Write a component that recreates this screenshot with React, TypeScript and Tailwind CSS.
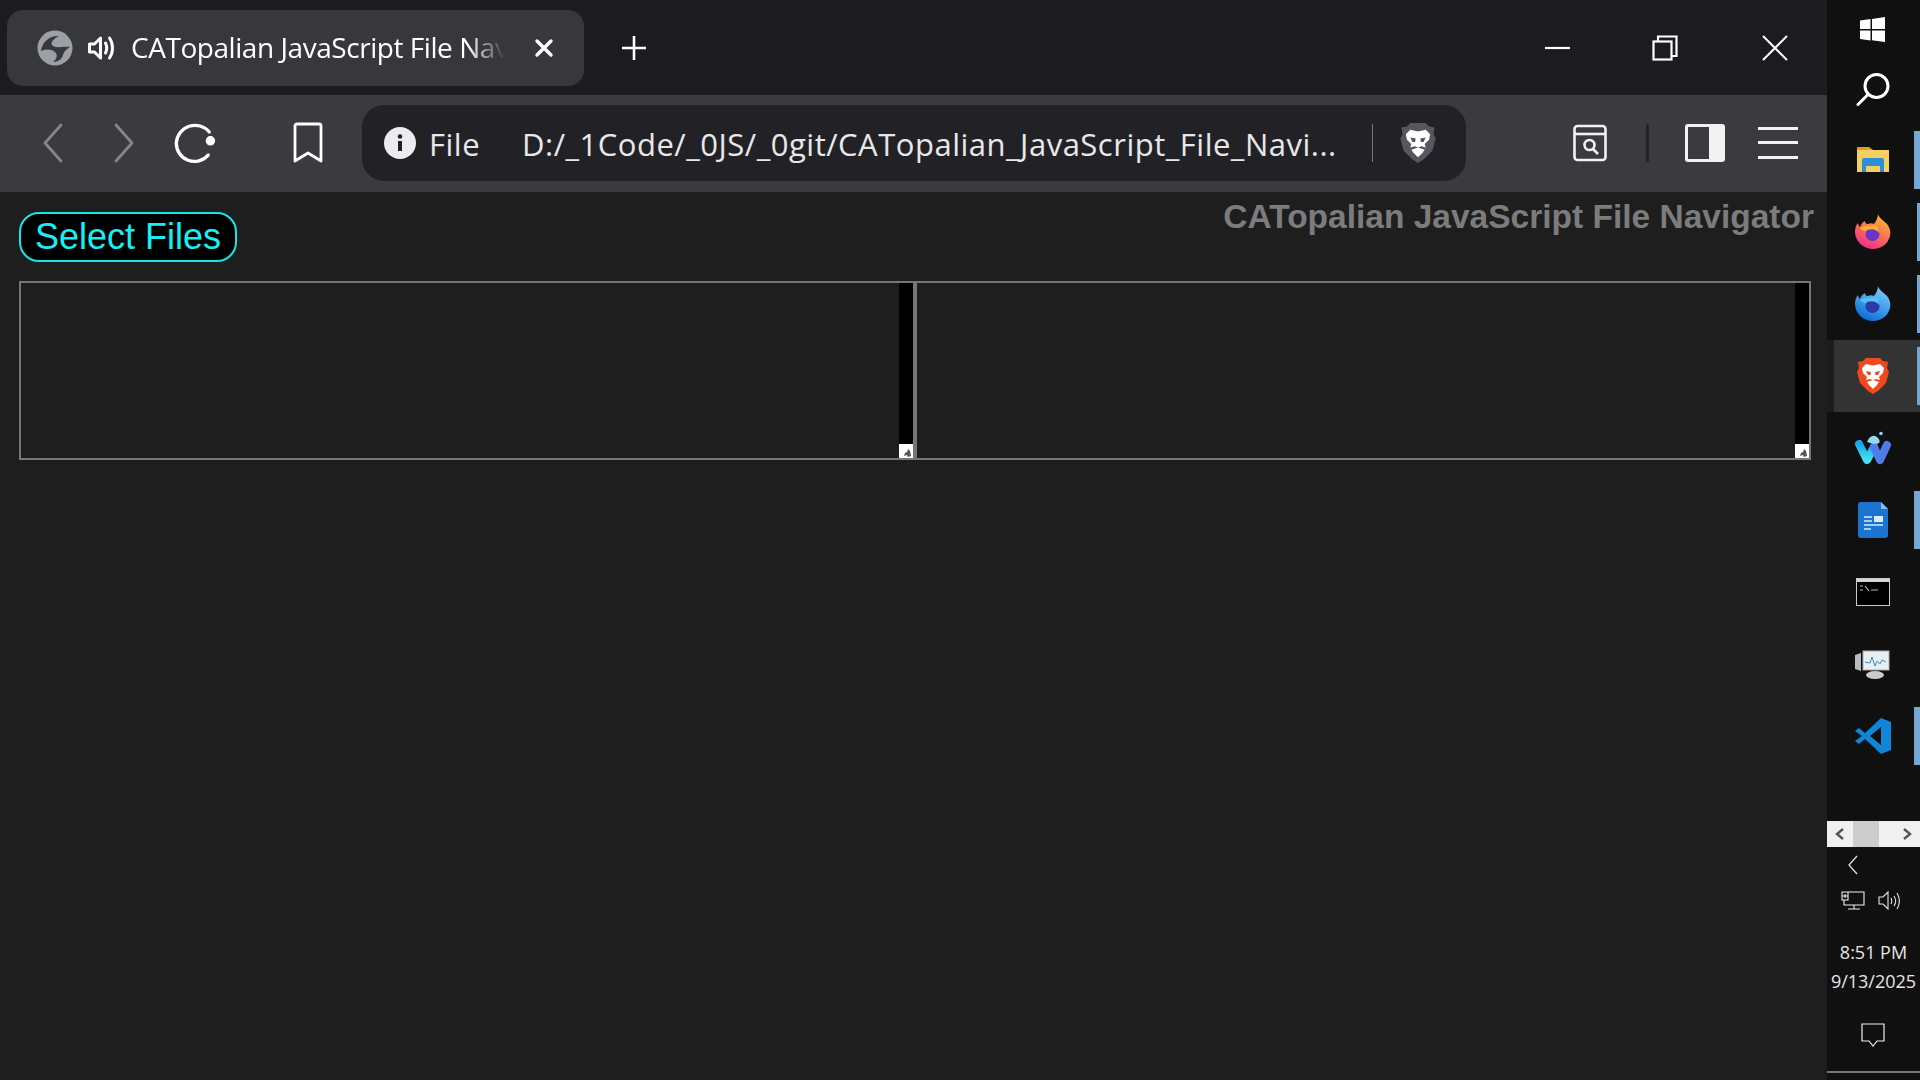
import { ReactNode } from 'react';

const segoe = 'font-["Open_Sans",sans-serif]';
const arial = 'font-["Liberation_Sans",Arial,sans-serif]';

const GlobeIcon = () => (
    <svg width="36" height="36" viewBox="0 0 36 36">
        <circle cx="18" cy="18" r="17.500" fill="#9aa0a6" />
        <path d="M4 21C5 12 13 5 22 6c-4 2-9 6-7 9 3 4 11 1 18 2-3 2-6 4-7 8-1 4-5 7-10 7 4-3 5-7 2-10-4-3-9-3-14-1z" fill="#37373c" />
    </svg>
);

const SpeakerIcon = () => (
    <svg width="30" height="30" viewBox="0 0 30 30" fill="none" stroke="#fff" strokeWidth="3" strokeLinejoin="round" strokeLinecap="round">
        <path d="M2.500 11h5l6-6v20l-6-6h-5z" />
        <path d="M18.500 10c1.500 3 1.500 7 0 10" />
        <path d="M22.500 5c4 6 4 14 0 20" />
    </svg>
);

const BraveShield = ({ body, face, w = 36, h = 42 }: { body: string; face: string; w?: number; h?: number }) => (
    <svg width={w} height={h} viewBox="0 0 32 38">
        <path d="M9 1h14l3 3 5 1-1 6 2 4-3 11-8 8-5 3-5-3-8-8L0 15l2-4-1-6 5-1z" fill={body} />
        <path d="M9 7l7 1.500L23 7l4 4-1 5-4 4 1 3-4-1-3 1-3-1-4 1 1-3-4-4-1-5z" fill={face} />
        <path d="M9 14l5 1 0 3-3 0zM23 14l-5 1 0 3 3 0z" fill={body} />
        <path d="M14 15h4l1 6-3 2-3-2z" fill={face} />
        <path d="M10 25l6-2 6 2-2 3-4 4-4-4z" fill={face} />
    </svg>
);

const Slot = ({ w, children, className = '' }: { w: string; children?: ReactNode; className?: string }) => (
    <div className={`flex items-center justify-center shrink-0 ${w} ${className}`}>{children}</div>
);

const TabStrip = () => (
    <div className="flex items-start h-[95px] bg-[#1c1c20] pt-[10px] pl-[7px] shrink-0">
        <div className="flex items-center w-[577px] h-[76px] rounded-[16px] bg-[#37373c]">
            <Slot w="w-[36px]" className="ml-[30px]"><GlobeIcon /></Slot>
            <Slot w="w-[30px]" className="ml-[14px]"><SpeakerIcon /></Slot>
            <span className={`ml-[14px] w-[374px] overflow-hidden whitespace-nowrap text-[28px] leading-[36px] -mt-[2px] tracking-[-0.45px] text-white [mask-image:linear-gradient(to_right,black_90%,transparent)] ${segoe}`}>
                CATopalian JavaScript File Navigator
            </span>
            <Slot w="w-[20px]" className="ml-[29px]">
                <svg width="20" height="20" viewBox="0 0 20 20" stroke="#fff" strokeWidth="3.400" strokeLinecap="round">
                    <path d="M3 3l14 14M17 3L3 17" />
                </svg>
            </Slot>
        </div>
        <Slot w="w-[28px]" className="ml-[36px] h-[76px]">
            <svg width="28" height="28" viewBox="0 0 28 28" stroke="#fff" strokeWidth="2.600">
                <path d="M14 2v24M2 14h24" />
            </svg>
        </Slot>
        <div className="flex items-center h-[76px] ml-[897px]">
            <svg width="26" height="4" viewBox="0 0 26 4"><path d="M0 2h25" stroke="#fff" strokeWidth="2.200" /></svg>
            <svg className="ml-[81px]" width="26" height="26" viewBox="0 0 26 26" fill="none" stroke="#fff" strokeWidth="2.200">
                <rect x="1.500" y="6.500" width="18" height="18" />
                <path d="M6 6V1.500h18.500V21H20" />
            </svg>
            <svg className="ml-[84px]" width="26" height="26" viewBox="0 0 26 26" stroke="#fff" strokeWidth="2">
                <path d="M1 1l24 24M25 1L1 25" />
            </svg>
        </div>
    </div>
);

const Toolbar = () => (
    <div className="flex items-center h-[97px] mb-px pb-[2px] bg-[#3a3a3f] shrink-0">
        <Slot w="w-[22px]" className="ml-[42px]">
            <svg width="20" height="40" viewBox="0 0 20 40" fill="none" stroke="#85858a" strokeWidth="2.800" strokeLinecap="round" strokeLinejoin="round">
                <path d="M18 2L2 20l16 18" />
            </svg>
        </Slot>
        <Slot w="w-[22px]" className="ml-[49px]">
            <svg width="20" height="40" viewBox="0 0 20 40" fill="none" stroke="#85858a" strokeWidth="2.800" strokeLinecap="round" strokeLinejoin="round">
                <path d="M2 2l16 18L2 38" />
            </svg>
        </Slot>
        <Slot w="w-[44px]" className="ml-[38px]">
            <svg width="44" height="44" viewBox="0 0 40 40" fill="none" stroke="#fff" strokeWidth="3" strokeLinecap="round">
                <path d="M33 10A17 17 0 0 0 3 20a16.500 16.500 0 0 0 29 11" />
                <circle cx="34" cy="18" r="3.800" fill="#fff" strokeWidth="1" />
            </svg>
        </Slot>
        <Slot w="w-[30px]" className="ml-[76px]">
            <svg width="30" height="42" viewBox="0 0 30 42" fill="none" stroke="#fff" strokeWidth="2.800" strokeLinejoin="round">
                <path d="M4 2h22a2 2 0 0 1 2 2v35l-13-8-13 8V4a2 2 0 0 1 2-2z" />
            </svg>
        </Slot>
        <div className="flex items-center w-[1104px] h-[76px] ml-[39px] rounded-[22px] bg-[#222226] text-[#e8e8ea]">
            <Slot w="w-[32px]" className="ml-[22px]">
                <svg width="32" height="32" viewBox="0 0 32 32">
                    <circle cx="16" cy="16" r="16" fill="#ececef" />
                    <rect x="14" y="14" width="4" height="10" fill="#222226" />
                    <circle cx="16" cy="9.500" r="2.300" fill="#222226" />
                </svg>
            </Slot>
            <span className={`ml-[13px] w-[93px] text-[31px] leading-[44px] mt-[2px] tracking-[0.5px] ${segoe}`}>File</span>
            <span className={`w-[850px] whitespace-nowrap overflow-hidden text-[31px] leading-[44px] mt-[2px] tracking-[0.5px] ${segoe}`}>
                D:/_1Code/_0JS/_0git/CATopalian_JavaScript_File_Navi...
            </span>
            <div className="w-px h-[38px] bg-[#77777b] shrink-0" />
            <Slot w="w-[36px]" className="ml-[27px]"><BraveShield body="#55565f" face="#ffffff" /></Slot>
        </div>
        <Slot w="w-[34px]" className="ml-[107px]">
            <svg width="42" height="38" viewBox="0 0 34 38" fill="none" stroke="#f2f2f2" strokeWidth="2.600">
                <rect x="1.500" y="2" width="31" height="34" rx="3" />
                <path d="M1.500 10h31" />
                <circle cx="16.500" cy="21" r="5" />
                <path d="M20 25l5 5" />
            </svg>
        </Slot>
        <div className="w-[3px] h-[38px] ml-[39px] rounded-full bg-[#232327] shrink-0" />
        <div className="flex w-[40px] h-[38px] ml-[36px] rounded-[3px] border-[3px] border-[#f2f2f2] shrink-0">
            <div className="w-[21px]" />
            <div className="flex-1 bg-[#f2f2f2]" />
        </div>
        <div className="flex flex-col justify-between w-[40px] h-[32px] ml-[33px] shrink-0">
            <div className="h-[3px] bg-[#f2f2f2]" />
            <div className="h-[3px] bg-[#f2f2f2]" />
            <div className="h-[3px] bg-[#f2f2f2]" />
        </div>
    </div>
);

const TextPane = () => (
    <div className="flex w-[896px] h-[179px] border-2 border-[#767676] shrink-0">
        <div className="flex-1" />
        <div className="flex flex-col justify-end w-[14px] bg-black">
            <div className="flex items-end justify-end h-[14px] bg-white">
                <svg width="12" height="12" viewBox="0 0 12 12" fill="#555">
                    <path d="M3 10l1-3 2-1 1-3 2 2 1 5-3 1-1-2z" />
                </svg>
            </div>
        </div>
    </div>
);

const PageContent = () => (
    <div className="flex-1 flex flex-col bg-[#1e1e1e]">
        <div className="flex items-start justify-between h-[89px] pl-[19px] pr-[13px]">
            <button className={`mt-[19px] w-[218px] h-[50px] rounded-[20px] border-2 border-[#16e6ea] bg-black text-[#16f0f4] text-[36px] leading-none ${arial}`}>
                Select Files
            </button>
            <span className={`mt-[4px] text-[33.500px] leading-[40px] font-bold text-[#7c7c7c] whitespace-nowrap ${arial}`}>
                CATopalian JavaScript File Navigator
            </span>
        </div>
        <div className="flex pl-[19px] -mt-px">
            <TextPane />
            <TextPane />
        </div>
    </div>
);

const TaskbarIcon = ({ children, bar, active }: { children: ReactNode; bar?: 'left' | 'right'; active?: boolean }) => (
    <div className={`relative flex items-center justify-center h-[72px] shrink-0 ${active ? 'bg-[#333333] border-l-[7px] border-[#1c1c1c]' : ''}`}>
        <div className={active ? '-ml-[9px]' : '-ml-[2px]'}>{children}</div>
        {bar && (
            <div className={`absolute top-[7px] bottom-[7px] right-0 bg-[#76a6d3] ${bar === 'left' ? 'w-[6px]' : 'w-[3px]'}`} />
        )}
    </div>
);

const FoxIcon = ({ id, outer, inner, flame }: { id: string; outer: [string, string]; inner: string; flame: string }) => (
    <svg width="36" height="36" viewBox="0 0 36 36">
        <defs>
            <linearGradient id={id} x1="0.800" y1="0" x2="0.300" y2="1">
                <stop offset="0" stopColor={outer[0]} />
                <stop offset="1" stopColor={outer[1]} />
            </linearGradient>
        </defs>
        <path d="M23 0c1 4 5 6 8 9 4 4 5 9 4 13-2 8-9 13-17 13C8 35 0 27 0 18c0-4 1-7 3-9 0 2 1 3 2 4 1-3 3-5 5-6 0 2 1 3 3 3 2-1 4-1 6 0 2-3 4-6 4-10z" fill={`url(#${id})`} />
        <path d="M5 14c3-2 8-3 12-1 4 2 6 4 7 7-3-3-6-4-9-3-4 1-7 0-10-3z" fill={flame} />
        <circle cx="17.500" cy="20" r="7" fill={inner} />
        <path d="M11 17c3-2 9-3 13 2l-1-6c-4-3-9-1-12 4z" fill={flame} />
    </svg>
);

const Taskbar = () => (
    <div className="flex flex-col w-[93px] h-full bg-[#101010] text-[#e6e6e6]">
        <div className="flex flex-col items-center h-[124px] shrink-0 pt-[17px] pr-[2px]">
            <svg width="25" height="25" viewBox="0 0 25 25" fill="#fff">
                <path d="M0 3.500l10.500-1.400v10H0zM12 1.900L25 0v12.100H12zM0 13.400h10.500v10L0 22zM12 13.400h13V25l-13-1.800z" />
            </svg>
            <svg className="mt-[31px]" width="34" height="34" viewBox="0 0 34 34" fill="none" stroke="#fff" strokeWidth="3" strokeLinecap="round">
                <circle cx="20.500" cy="13" r="11.500" />
                <path d="M12 21.500L2 31.500" />
            </svg>
        </div>
        <TaskbarIcon bar="left">
            <svg width="34" height="28" viewBox="0 0 34 28">
                <path d="M1 2a1 1 0 0 1 1-1h11l4 3H1z" fill="#d9a21f" />
                <rect x="1" y="4" width="32" height="22" fill="#f5cf62" />
                <path d="M8 12h18a2 2 0 0 1 2 2v12h-4v-6H10v6H6V14a2 2 0 0 1 2-2z" fill="#2d8fd8" />
                <rect x="10" y="22" width="14" height="4" fill="#f5cf62" />
            </svg>
        </TaskbarIcon>
        <TaskbarIcon bar="right">
            <FoxIcon id="firefox" outer={['#ffc020', '#f0288a']} inner="#6a35c8" flame="#ffb030" />
        </TaskbarIcon>
        <TaskbarIcon bar="right">
            <FoxIcon id="thunderbird" outer={['#7bd3ff', '#0a6ad8']} inner="#2a3aa8" flame="#58c0f4" />
        </TaskbarIcon>
        <TaskbarIcon bar="right" active>
            <BraveShield body="#f1481e" face="#ffffff" w={32} h={38} />
        </TaskbarIcon>
        <TaskbarIcon>
            <svg width="38" height="34" viewBox="0 0 38 34" fill="none" strokeLinecap="round" strokeLinejoin="round">
                <defs>
                    <linearGradient id="windsurf" x1="0" y1="0" x2="0" y2="1">
                        <stop offset="0" stopColor="#18a8e8" />
                        <stop offset="1" stopColor="#45e0f0" />
                    </linearGradient>
                </defs>
                <path d="M5 13l8 16 7-13" stroke="url(#windsurf)" strokeWidth="8" />
                <path d="M20 16l6 13 7-15" stroke="#4f7cea" strokeWidth="8" />
                <path d="M13 11c2-5 5-7 8-6 3 1 6 5 4 7-3 2-9 0-12-1z" fill="#8fdcf0" />
                <circle cx="27" cy="2.500" r="1.800" fill="#7fd8ee" />
            </svg>
        </TaskbarIcon>
        <TaskbarIcon bar="left">
            <svg width="30" height="36" viewBox="0 0 30 36">
                <path d="M3 0h20l7 7v26a3 3 0 0 1-3 3H3a3 3 0 0 1-3-3V3a3 3 0 0 1 3-3z" fill="#1b74d0" />
                <path d="M23 0l7 7h-7z" fill="#7ec0f2" />
                <path d="M6 15h8M6 19h8M6 23h19M6 27h7" stroke="#d8ecfb" strokeWidth="1.500" />
                <rect x="16" y="14" width="9" height="6" fill="#d8ecfb" />
            </svg>
        </TaskbarIcon>
        <TaskbarIcon>
            <svg width="34" height="28" viewBox="0 0 34 28">
                <rect x="0.500" y="0.500" width="33" height="27" fill="#000" stroke="#c9c9c9" />
                <rect x="1" y="1" width="32" height="3" fill="#d5d5d5" />
                <path d="M4 8h3M4 12h3M9 8l4 5M15 12h7" stroke="#bbbbbb" strokeWidth="1.200" />
            </svg>
        </TaskbarIcon>
        <TaskbarIcon>
            <svg width="36" height="32" viewBox="0 0 36 32">
                <path d="M0 7l6-2v18l-6-2z" fill="#b8bcc0" />
                <rect x="8" y="3" width="26" height="19" fill="#e9eef2" stroke="#a9adb1" />
                <path d="M10 14l5 1 2-6 3 9 2-5 3 3 2-4 4 2" fill="none" stroke="#2e8fd6" strokeWidth="1" />
                <ellipse cx="20" cy="27" rx="9" ry="4" fill="#c9cbce" />
            </svg>
        </TaskbarIcon>
        <TaskbarIcon bar="left">
            <svg width="36" height="36" viewBox="0 0 36 36">
                <path d="M26 0l10 4v28l-10 4L10 21l-6 5-4-3 7-5-7-5 4-3 6 5z" fill="#0f86d8" />
                <path d="M26 9v18l-11-9z" fill="#101010" />
            </svg>
        </TaskbarIcon>
        <div className="h-[13px] shrink-0 mt-[36px]" />
        <div className="flex items-center justify-between h-[26px] px-[8px] bg-[#f0f0f0] shrink-0 relative">
            <svg width="10" height="12" viewBox="0 0 10 12" fill="none" stroke="#555" strokeWidth="2.400"><path d="M8 1L2 6l6 5" /></svg>
            <svg width="10" height="12" viewBox="0 0 10 12" fill="none" stroke="#555" strokeWidth="2.400"><path d="M2 1l6 5-6 5" /></svg>
            <div className="absolute left-[26px] top-0 w-[26px] h-full bg-[#cdcdcd]" />
        </div>
        <div className="pl-[20px] pt-[8px] h-[43px] shrink-0">
            <svg width="12" height="20" viewBox="0 0 12 20" fill="none" stroke="#e0e0e0" strokeWidth="1.300"><path d="M10 1L2 10l8 9" /></svg>
        </div>
        <div className="flex items-start gap-[13px] pl-[14px] h-[36px] shrink-0 pt-[1px]">
            <svg width="24" height="20" viewBox="0 0 24 20" fill="none" stroke="#f0f0f0" strokeWidth="1.100">
                <path d="M5 1h18v13H3V9M1 1h6v8H1zM1 5h6M4 3v4M13 14v4M7 18h12" />
            </svg>
            <svg width="24" height="20" viewBox="0 0 24 20" fill="none" stroke="#e6e6e6" strokeWidth="1.100">
                <path d="M1 6h4l5-5v17l-5-5H1zM13 7c1 2 1 4 0 6M16 5c2 3 2 7 0 10M19 2c3 5 3 11 0 16" />
            </svg>
        </div>
        <div className={`flex flex-col items-center text-[18px] leading-[29px] whitespace-nowrap pt-[12px] ${segoe}`}>
            <span>8:51 PM</span>
            <span>9/13/2025</span>
        </div>
        <div className="flex justify-center pt-[27px] pr-[2px]">
            <svg width="24" height="25" viewBox="0 0 24 25" fill="none" stroke="#f0f0f0" strokeWidth="1.200">
                <path d="M1 1h22v17h-7l-4 5-4-5H1z" />
            </svg>
        </div>
        <div className="h-[2px] mt-[23px] bg-[#777777] shrink-0" />
    </div>
);

export default function App() {
    return (
        <div className="flex w-[1920px] h-[1080px] overflow-hidden">
            <div className="flex flex-col w-[1827px] shrink-0 bg-[#1e1e1e]">
                <TabStrip />
                <Toolbar />
                <PageContent />
            </div>
            <Taskbar />
        </div>
    );
}
